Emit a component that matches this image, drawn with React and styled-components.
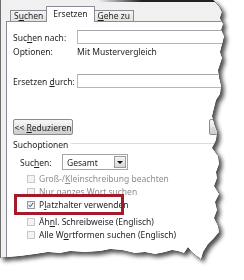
import React from "react";
import styled, { createGlobalStyle } from "styled-components";

const GlobalStyle = createGlobalStyle`
  html, body {
    margin: 0;
    background: #fff;
  }
  body {
    font-family: "Noto Sans", "Open Sans", sans-serif;
  }
`;

// outline of the torn-off screenshot
const tear = [
  [0, 0], [213, 0], [216, 3], [219, 6], [222, 12], [220, 18], [223, 24],
  [221, 30], [224, 36], [222, 44], [220, 52], [222, 58], [220, 64],
  [218, 70], [219, 78], [221, 86], [220, 94], [216, 100], [214, 108],
  [212, 116], [214, 124], [217, 132], [216, 140], [212, 148], [218, 156],
  [219, 164], [216, 172], [217, 178], [214, 186], [219, 194], [215, 202],
  [217, 210], [214, 218], [218, 226], [219, 232], [214, 238], [208, 244],
  [203, 252], [201, 259], [197, 256], [192, 252], [188, 247], [184, 253],
  [178, 251], [172, 250], [165, 252], [155, 254], [145, 252], [135, 253],
  [122, 250], [110, 249], [100, 251], [85, 252], [70, 251], [60, 253],
  [48, 252], [35, 254], [20, 256], [8, 257], [0, 258],
];
const tearPath = `polygon(${tear.map(([x, y]) => `${x}px ${y}px`).join(", ")})`;

const Page = styled.div`
  width: 244px;
  height: 280px;
  overflow: hidden;
  background: #fff;
`;

// shadow + dark outline along the torn edge
const TornPaper = styled.div`
  width: 244px;
  height: 262px;
  filter: drop-shadow(0.7px 0 0 #1a1a1a) drop-shadow(0 0.7px 0 #1a1a1a)
    drop-shadow(3px 3px 2px rgba(0, 0, 0, 0.7));
`;

const Dialog = styled.div`
  position: relative;
  width: 244px;
  height: 262px;
  overflow: hidden;
  box-sizing: border-box;
  background: #f0f0f0;
  border-left: 1px solid #6d6d6d;
  padding: 7px 0 0 5px;
  clip-path: ${tearPath};
`;

const TopEdge = styled.div`
  position: absolute;
  top: 0;
  left: 0;
  right: 0;
  height: 2px;
  background: linear-gradient(to right, rgba(0, 0, 0, 0) 40%, #222 58%);
`;

const Tabs = styled.div`
  display: flex;
  align-items: flex-end;
  height: 15px;
  padding-left: 4px;
  margin-bottom: -1px;
  position: relative;
  z-index: 1;
`;

const Tab = styled.div`
  box-sizing: border-box;
  height: ${(p) => (p.$active ? "16px" : "12px")};
  padding: ${(p) => (p.$active ? "2px 6px 0" : "0 3px")};
  margin: ${(p) => (p.$active ? "0 -1px" : "0")};
  border: 1px solid #898c95;
  border-bottom: ${(p) => (p.$active ? "none" : "1px solid #898c95")};
  background: ${(p) =>
    p.$active ? "#fff" : "linear-gradient(#f3f3f3, #e2e2e2)"};
  font-size: 8.5px;
  line-height: 10px;
  color: #1e1e1e;
  white-space: nowrap;
  position: relative;
  z-index: ${(p) => (p.$active ? 2 : 1)};
`;

const Panel = styled.div`
  box-sizing: border-box;
  width: 280px;
  height: 260px;
  border: 1px solid #898c95;
  background: #fff;
  padding: 8px 0 0 6px;
  font-size: 8.5px;
  color: #1e1e1e;
`;

const FieldRow = styled.div`
  display: flex;
  align-items: center;
  height: 14px;
  margin-top: ${(p) => p.$top || 0}px;
`;

const Label = styled.div`
  width: ${(p) => p.$w || 64}px;
  padding-left: ${(p) => p.$pad || 0}px;
  flex-shrink: 0;
  white-space: nowrap;
`;

const Input = styled.div`
  box-sizing: border-box;
  height: 14px;
  flex: 1;
  border: 1px solid #b4b7bd;
  border-top-color: #a3a6ad;
  background: #fff;
`;

const InfoRow = styled.div`
  display: flex;
  align-items: center;
  height: 12px;
  margin-top: 1px;
`;

const ButtonRow = styled.div`
  display: flex;
  margin-top: 31px;
`;

const Button = styled.div`
  box-sizing: border-box;
  width: ${(p) => p.$w}px;
  height: 16px;
  margin-left: ${(p) => p.$left || 0}px;
  border: 1px solid #8c8c8c;
  border-radius: 2px;
  background: linear-gradient(#f6f6f6 0%, #e9e9e9 50%, #dadada 51%, #cfcfcf 100%);
  display: flex;
  align-items: center;
  justify-content: center;
  white-space: nowrap;
`;

const Heading = styled.div`
  display: flex;
  align-items: center;
  gap: 3px;
  height: 10px;
  margin-top: 4px;
  white-space: nowrap;

  &::after {
    content: "";
    flex: 1;
    height: 1px;
    margin-top: -2px;
    background: #dcdcdc;
  }
`;

const SelectRow = styled.div`
  display: flex;
  align-items: center;
  height: 16px;
  margin-top: 5px;
`;

const Select = styled.div`
  box-sizing: border-box;
  width: 66px;
  height: 16px;
  border: 1px solid #a5a5a5;
  display: flex;
  align-items: center;
  padding-left: 4px;
  background: #fff;
`;

const SelectText = styled.div`
  flex: 1;
`;

const Arrow = styled.div`
  box-sizing: border-box;
  width: 12px;
  height: 12px;
  margin-right: 1px;
  border: 1px solid #9c9c9c;
  background: linear-gradient(#f4f4f4, #d8d8d8);
  display: flex;
  align-items: center;
  justify-content: center;

  &::before {
    content: "";
    border-left: 3px solid transparent;
    border-right: 3px solid transparent;
    border-top: 3px solid #111;
  }
`;

const CheckList = styled.div`
  position: relative;
  margin-top: 2px;
`;

const CheckRow = styled.div`
  display: flex;
  align-items: center;
  gap: 4px;
  height: 13px;
  padding-left: 14px;
  margin-bottom: ${(p) => p.$after || 0}px;
  color: ${(p) => (p.$disabled ? "#8e8e8e" : "#1e1e1e")};
  white-space: nowrap;
`;

const Box = styled.div`
  box-sizing: border-box;
  width: 8px;
  height: 8px;
  border: 1px solid ${(p) => (p.$disabled ? "#c8c8c8" : "#9a9a9a")};
  background: ${(p) =>
    p.$disabled ? "#f4f4f4" : "linear-gradient(135deg, #e2e2e2, #fafafa)"};
  display: flex;
  align-items: center;
  justify-content: center;
  flex-shrink: 0;
`;

const Highlight = styled.div`
  position: absolute;
  left: 1px;
  top: 22px;
  width: 110px;
  height: 21px;
  box-sizing: border-box;
  border: 3.5px solid #a31a2a;
  pointer-events: none;
`;

const U = styled.span`
  text-decoration: underline;
  text-underline-offset: 1px;
`;

const Check = () => (
  <svg width="8" height="8" viewBox="0 0 8 8">
    <path d="M1.2 4.2 L3 6.3 L6.8 1.3" fill="none" stroke="#27408e" strokeWidth="1.3" />
  </svg>
);

export default function App() {
  return (
    <Page>
      <GlobalStyle />
      <TornPaper>
        <Dialog>
          <TopEdge />
          <Tabs>
            <Tab>S<U>u</U>chen</Tab>
            <Tab $active>Ersetzen</Tab>
            <Tab><U>G</U>ehe zu</Tab>
          </Tabs>
          <Panel>
            <FieldRow>
              <Label>Suc<U>h</U>en nach:</Label>
              <Input />
            </FieldRow>
            <InfoRow>
              <Label>Optionen:</Label>
              <div>Mit Mustervergleich</div>
            </InfoRow>
            <FieldRow $top={17}>
              <Label>Ersetzen <U>d</U>urch:</Label>
              <Input />
            </FieldRow>
            <ButtonRow>
              <Button $w={60}>
                <span>&lt;&lt; <U>R</U>eduzieren</span>
              </Button>
              <Button $w={60} $left={136}>
                <span>Ersetzen</span>
              </Button>
            </ButtonRow>
            <Heading>Suchoptionen</Heading>
            <SelectRow>
              <Label $w={42} $pad={7}>Suc<U>h</U>en:</Label>
              <Select>
                <SelectText>Gesamt</SelectText>
                <Arrow />
              </Select>
            </SelectRow>
            <CheckList>
              <CheckRow $disabled>
                <Box $disabled />
                <span>Groß-/<U>K</U>leinschreibung beachten</span>
              </CheckRow>
              <CheckRow $disabled>
                <Box $disabled />
                <span>Nur <U>g</U>anzes Wort suchen</span>
              </CheckRow>
              <CheckRow $after={4}>
                <Box>
                  <Check />
                </Box>
                <span>P<U>l</U>atzhalter verwenden</span>
              </CheckRow>
              <CheckRow>
                <Box $disabled />
                <span>Äh<U>n</U>l. Schreibweise (Englisch)</span>
              </CheckRow>
              <CheckRow>
                <Box $disabled />
                <span>Alle W<U>o</U>rtformen suchen (Englisch)</span>
              </CheckRow>
              <Highlight />
            </CheckList>
          </Panel>
        </Dialog>
      </TornPaper>
    </Page>
  );
}
